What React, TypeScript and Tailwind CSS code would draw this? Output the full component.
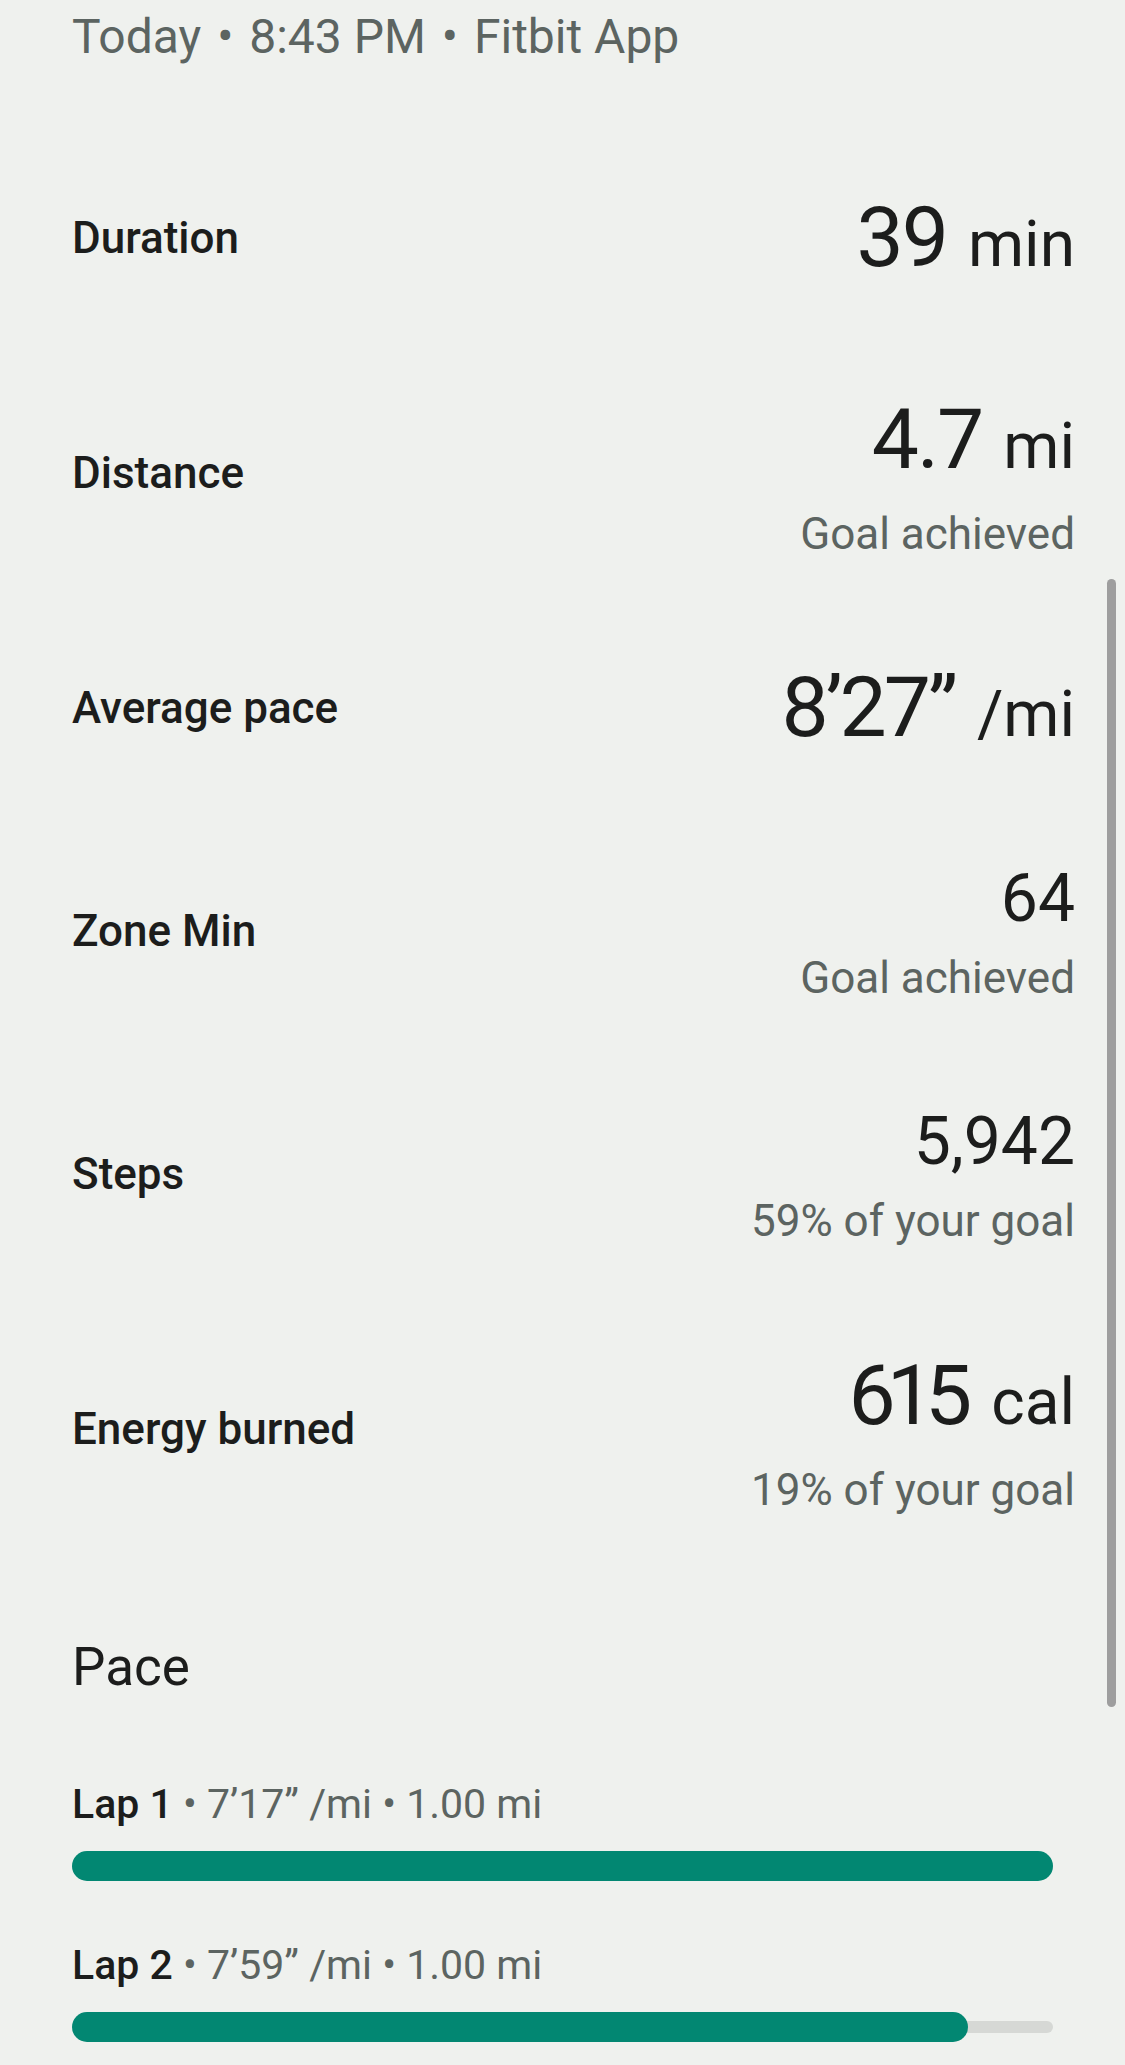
import React from "react";

type Row = {
  label: string;
  value: string;
  unit?: string;
  sub?: string;
  big: boolean;
  track?: string;
  unitGap?: string;
  height: string;
};

const rows: Row[] = [
  { label: "Duration", value: "39", unit: "min", big: true, track: "tracking-[-2px]", unitGap: "ml-[21px]", height: "h-[203px]" },
  { label: "Distance", value: "4.7", unit: "mi", sub: "Goal achieved", big: true, track: "tracking-[-2px]", unitGap: "ml-[21px]", height: "h-[267px]" },
  { label: "Average pace", value: "8’27”", unit: "/mi", big: true, track: "tracking-[-3px]", unitGap: "ml-[22px]", height: "h-[203px]" },
  { label: "Zone Min", value: "64", sub: "Goal achieved", big: false, height: "h-[243px]" },
  { label: "Steps", value: "5,942", sub: "59% of your goal", big: false, height: "h-[243px]" },
  { label: "Energy burned", value: "615", unit: "cal", sub: "19% of your goal", big: true, track: "tracking-[-9px]", unitGap: "ml-[28px]", height: "h-[267px]" },
];

const laps = [
  { name: "Lap 1", pace: "7’17”", dist: "1.00 mi", pct: 100 },
  { name: "Lap 2", pace: "7’59”", dist: "1.00 mi", pct: 91.3 },
];

function StatRow({ row }: { row: Row }) {
  return (
    <div className={`flex items-center justify-between ${row.height}`}>
      <div className="text-[44px] leading-[56px] font-medium text-[#1c1d1c]">{row.label}</div>
      <div className={`flex flex-col items-end ${row.sub ? "pt-[4px]" : ""}`}>
        {row.big ? (
          <div className={`text-[84px] leading-[104px] text-[#1c1d1c] ${row.track ?? ""}`}>
            {row.value}
            {row.unit && (
              <span className={`${row.unitGap ?? "ml-[19px]"} text-[64px] leading-none tracking-normal`}>
                {row.unit}
              </span>
            )}
          </div>
        ) : (
          <div className="text-[66px] leading-[80px] text-[#1c1d1c]">{row.value}</div>
        )}
        {row.sub && (
          <div className={`${row.big ? "mt-[14px]" : "mt-[11px]"} text-[44px] leading-[56px] text-[#5c6461]`}>
            {row.sub}
          </div>
        )}
      </div>
    </div>
  );
}

export default function App() {
  return (
    <div
      className="relative h-[2065px] overflow-hidden bg-[#eff1ee]"
      style={{ fontFamily: "Roboto, 'Noto Sans', sans-serif" }}
    >
      <div className="pl-[72px] pr-[50px]">
        <div className="pt-[5px] text-[48px] leading-[64px] text-[#5c6461]">
          Today<span className="mx-[4px]"> • </span>8:43 PM<span className="mx-[4px]"> • </span>Fitbit App
        </div>

        <div className="mt-[67px] flex flex-col">
          {rows.map((r) => (
            <StatRow key={r.label} row={r} />
          ))}
        </div>

        <div className="mt-[69px] text-[53px] leading-[72px] text-[#1c1d1c]">Pace</div>

        <div className="mt-[73px] mr-[22px] flex flex-col">
          {laps.map((l, i) => (
            <div key={l.name} className={i > 0 ? "mt-[56px]" : ""}>
              <div className="text-[41px] leading-[56px]">
                <span className="font-medium text-[#1c1d1c]">{l.name}</span>
                <span className="text-[#5c6461]">
                  {" "}• {l.pace} /mi • {l.dist}
                </span>
              </div>
              <div className="mt-[19px] grid h-[30px] items-center">
                <div className="col-start-1 row-start-1 h-[12px] w-full rounded-full bg-[#d6d8d5]" />
                <div
                  className="col-start-1 row-start-1 h-[30px] rounded-full bg-[#028772]"
                  style={{ width: `${l.pct}%` }}
                />
              </div>
            </div>
          ))}
        </div>
      </div>

      <div className="absolute left-[1107px] top-[579px] h-[1128px] w-[9px] rounded-full bg-[#9e9e9e]" />
    </div>
  );
}
